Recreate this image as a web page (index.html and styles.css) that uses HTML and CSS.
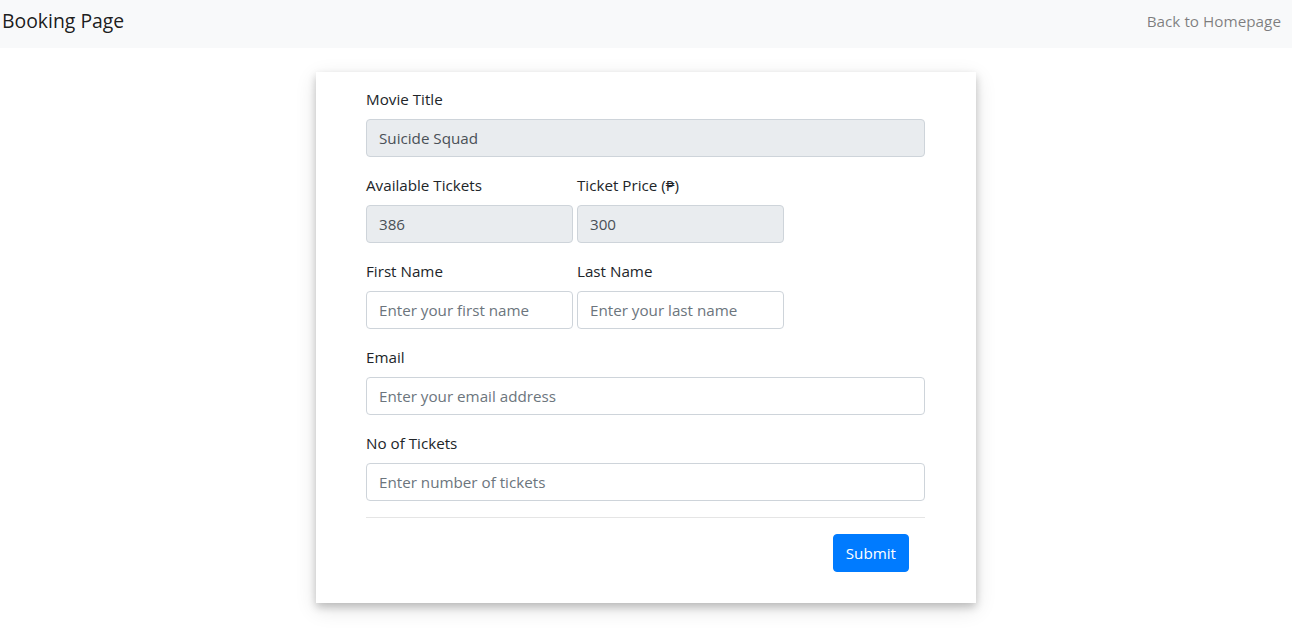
FILE: index.html
```html
<!DOCTYPE html>
<html lang="en">
<head>
<meta charset="utf-8">
<title>Booking Page</title>
<link rel="stylesheet" href="styles.css">
</head>
<body>
<nav class="navbar">
  <span class="brand">Booking Page</span>
  <a class="nav-link" href="#">Back to Homepage</a>
</nav>
<main class="page">
  <form class="card">
    <div class="group">
      <label class="label">Movie Title</label>
      <input class="control" type="text" value="Suicide Squad" readonly>
    </div>
    <div class="row">
      <div class="group">
        <label class="label">Available Tickets</label>
        <input class="control" type="text" value="386" readonly>
      </div>
      <div class="group">
        <label class="label">Ticket Price (₱)</label>
        <input class="control" type="text" value="300" readonly>
      </div>
    </div>
    <div class="row">
      <div class="group">
        <label class="label">First Name</label>
        <input class="control" type="text" placeholder="Enter your first name">
      </div>
      <div class="group">
        <label class="label">Last Name</label>
        <input class="control" type="text" placeholder="Enter your last name">
      </div>
    </div>
    <div class="group">
      <label class="label">Email</label>
      <input class="control" type="email" placeholder="Enter your email address">
    </div>
    <div class="group">
      <label class="label">No of Tickets</label>
      <input class="control" type="text" placeholder="Enter number of tickets">
    </div>
    <hr class="divider">
    <div class="actions">
      <button class="btn" type="button">Submit</button>
    </div>
  </form>
</main>
</body>
</html>
```
FILE: styles.css
```css
* { box-sizing: border-box; }
html, body {
  margin: 0;
  padding: 0;
  background: #fff;
  font-family: "Open Sans", "Noto Sans", sans-serif;
  font-size: 15.2px;
  line-height: 1.5;
  color: #212529;
}
.navbar {
  height: 48px;
  background: #f8f9fa;
  display: flex;
  align-items: center;
  justify-content: space-between;
  padding: 0 11px 6px 2px;
}
.brand {
  font-size: 19.4px;
  color: rgba(0,0,0,.9);
  line-height: 30px;
}
.nav-link {
  color: rgba(0,0,0,.5);
  text-decoration: none;
  font-size: 15.3px;
}
.page {
  display: flex;
  justify-content: center;
  align-items: flex-start;
  padding: 24px 0 40px;
}
.card {
  width: 660px;
  background: #fff;
  box-shadow: 0 4px 8px 0 rgba(0,0,0,.2), 0 6px 20px 0 rgba(0,0,0,.12);
  padding: 15px 51px 15px 50px;
  margin: 0;
}
.group {
  margin-bottom: 16px;
  display: flex;
  flex-direction: column;
}
.row {
  display: grid;
  grid-template-columns: 207px 207px;
  column-gap: 4px;
}
.label {
  display: block;
  margin-bottom: 8px;
  line-height: 24px;
  font-size: 15.2px;
  color: #212529;
}
.control {
  display: block;
  width: 100%;
  height: 38px;
  padding: 6px 12px;
  font-family: inherit;
  font-size: 15.2px;
  line-height: 24px;
  color: #495057;
  background: #fff;
  border: 1px solid #ced4da;
  border-radius: 4px;
  outline: none;
}
.control[readonly] {
  background: #e9ecef;
}
.control::placeholder {
  color: #6c757d;
  opacity: 1;
}
.divider {
  border: 0;
  border-top: 1px solid rgba(0,0,0,.1);
  margin: 0 0 16px;
}
.actions {
  display: flex;
  justify-content: flex-end;
  padding-right: 16px;
  margin-bottom: 16px;
}
.btn {
  font-family: inherit;
  font-size: 15.2px;
  line-height: 24px;
  height: 38px;
  padding: 6px 12px;
  color: #fff;
  background: #007bff;
  border: 1px solid #007bff;
  border-radius: 4px;
  cursor: pointer;
}
```
